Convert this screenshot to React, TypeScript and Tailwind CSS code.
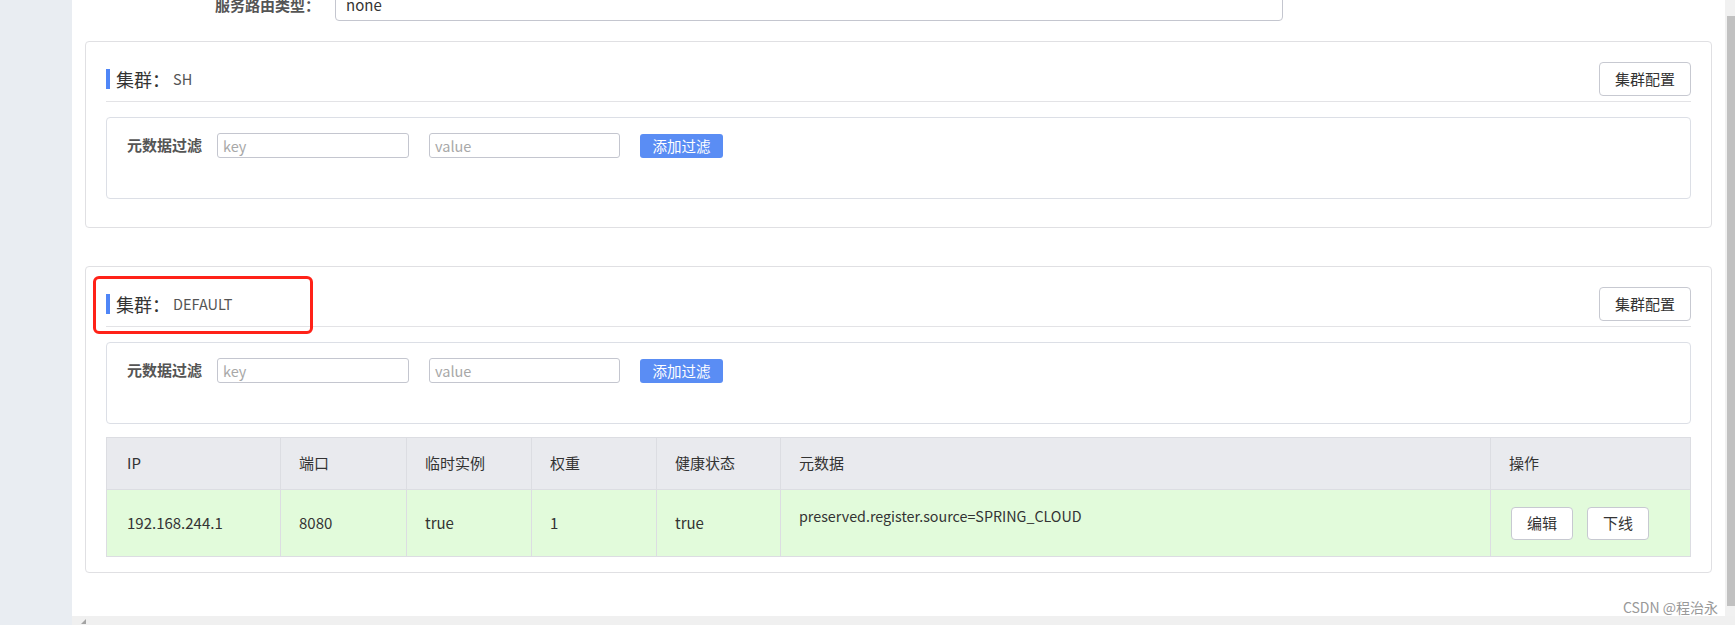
import React from "react";

const font = { fontFamily: '"Noto Sans CJK SC", "Liberation Sans", sans-serif' };

function FilterBox() {
  return (
    <div className="mt-[15px] mb-[13px] h-[82px] border border-[#dcdfe6] rounded-[4px] pt-[15px] pl-[20px]">
      <div className="flex items-center h-[25px]">
        <div className="w-[90px] text-[15px] font-bold text-[#555]">元数据过滤</div>
        <div className="w-[192px] h-[25px] border border-[#c4c6cf] rounded-[3px] flex items-center pl-[5px] text-[14.5px] text-[#a8a8a8]">
          key
        </div>
        <div className="ml-[20px] w-[191px] h-[25px] border border-[#c4c6cf] rounded-[3px] flex items-center pl-[5px] text-[14.5px] text-[#a8a8a8]">
          value
        </div>
        <div className="ml-[20px] w-[83px] h-[24px] bg-[#5a8df4] rounded-[3px] flex items-center justify-center text-[14.5px] text-white">
          添加过滤
        </div>
      </div>
    </div>
  );
}

function TitleRow({ name }: { name: string }) {
  return (
    <>
      <div className="flex items-center justify-between h-[34px]">
        <div className="flex items-center">
          <div className="w-[4px] h-[20px] bg-[#4f86f7]" />
          <span className="ml-[6px] text-[18px] text-[#333] leading-none">集群：</span>
          <span className="ml-[3px] text-[14.5px] text-[#555] leading-none">{name}</span>
        </div>
        <div className="w-[92px] h-[34px] border border-[#c7c9d1] rounded-[4px] flex items-center justify-center text-[15px] text-[#333]">
          集群配置
        </div>
      </div>
      <div className="mt-[5px] h-px bg-[#e3e3e6]" />
    </>
  );
}

const cols = ["w-[173px]", "w-[126px]", "w-[125px]", "w-[125px]", "w-[124px]", "w-[710px]", "flex-1"];

function Table() {
  const headers = ["IP", "端口", "临时实例", "权重", "健康状态", "元数据", "操作"];
  return (
    <div className="border border-[#dcdde2] text-[15px] text-[#333]">
      <div className="flex h-[52px] bg-[#e9eaee] border-b border-[#dcdde2]">
        {headers.map((h, i) => (
          <div
            key={h}
            className={`${cols[i]} ${i > 0 ? "border-l border-[#dcdde2] pl-[18px]" : "pl-[20px]"} flex items-center`}
          >
            {h}
          </div>
        ))}
      </div>
      <div className="flex h-[66px] bg-[#e2fbdb]">
        <div className="w-[173px] pl-[20px] flex items-center">192.168.244.1</div>
        <div className="w-[126px] border-l border-[#dcdde2] pl-[18px] flex items-center">8080</div>
        <div className="w-[125px] border-l border-[#dcdde2] pl-[18px] flex items-center">true</div>
        <div className="w-[125px] border-l border-[#dcdde2] pl-[18px] flex items-center">1</div>
        <div className="w-[124px] border-l border-[#dcdde2] pl-[18px] flex items-center">true</div>
        <div className="w-[710px] border-l border-[#dcdde2] pl-[18px] pt-[15px] text-[14.3px]">
          preserved.register.source=SPRING_CLOUD
        </div>
        <div className="flex-1 border-l border-[#dcdde2] pl-[20px] flex items-center gap-[14px]">
          <div className="w-[62px] h-[33px] bg-white border border-[#c7c9d1] rounded-[4px] flex items-center justify-center">
            编辑
          </div>
          <div className="w-[62px] h-[33px] bg-white border border-[#c7c9d1] rounded-[4px] flex items-center justify-center">
            下线
          </div>
        </div>
      </div>
    </div>
  );
}

export default function App() {
  return (
    <div className="w-[1735px] h-[625px] overflow-hidden flex flex-col bg-white" style={font}>
      <div className="flex h-[616px]">
        <div className="w-[72px] bg-[#e9edf2]" />
        <div className="flex-1 relative px-[13px] overflow-hidden">
          <div className="flex items-center h-[32px] mt-[-11px]">
            <div className="w-[235px] text-right text-[15px] font-bold text-[#555]">服务路由类型：</div>
            <div className="ml-[15px] w-[948px] h-[32px] border border-[#c4c6cf] rounded-[4px] flex items-center pl-[10px] text-[15px] text-[#333]">
              none
            </div>
          </div>

          <div className="mt-[20px] border border-[#e0e0e3] rounded-[4px] px-[20px] pt-[20px] pb-[15px]">
            <TitleRow name="SH" />
            <FilterBox />
          </div>

          <div className="relative mt-[38px] border border-[#e0e0e3] rounded-[4px] px-[20px] pt-[20px] pb-[15px]">
            <TitleRow name="DEFAULT" />
            <FilterBox />
            <Table />
            <div className="absolute left-[7px] top-[9px] w-[220px] h-[58px] border-[3px] border-[#ff2218] rounded-[6px]" />
          </div>

          <div className="absolute right-[7px] bottom-[1px] text-[14px] leading-[16px] text-[#999]">CSDN @程治永</div>
        </div>
        <div className="w-[10px] bg-[#f1f1f1] flex flex-col pt-[16px] pb-[10px] pl-[2px]">
          <div className="flex-1 bg-[#c1c1c1]" />
        </div>
      </div>
      <div className="flex h-[9px]">
        <div className="w-[72px] bg-[#e9edf2]" />
        <div className="flex-1 bg-[#f0f0f0] relative pl-[9px] pt-[3px]">
          <svg width="5" height="5" viewBox="0 0 5 5">
            <polygon points="5,0 5,5 0,5" fill="#a3a3a3" />
          </svg>
        </div>
      </div>
    </div>
  );
}
